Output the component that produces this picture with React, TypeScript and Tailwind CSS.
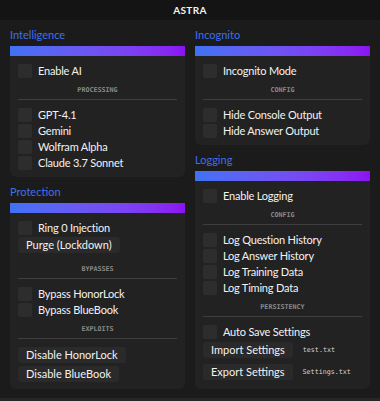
import type { ReactNode } from 'react';
import clsx from 'clsx';

const Box = () => <span className="block w-[14px] h-[14px] rounded-[2px] bg-[#2d2d2d] shrink-0" />;

function Check({ label }: { label: string }) {
  return (
    <div className="flex items-center gap-[6px] h-[14px]">
      <Box />
      <span className="leading-[14px] whitespace-nowrap tracking-[-0.2px]">{label}</span>
    </div>
  );
}

function Btn({ label, className }: { label: string; className?: string }) {
  return (
    <div className={clsx('flex', className)}>
      <span className="h-[16px] px-[8px] flex items-center rounded-[3px] bg-[#2a2a2a] whitespace-nowrap leading-[16px]">
        {label}
      </span>
    </div>
  );
}

function Label({ text, afterButton }: { text: string; afterButton?: boolean }) {
  return (
    <div className={clsx('flex flex-col items-center', afterButton ? 'mt-[12px]' : 'mt-[8px]')}>
      <span className="font-['DejaVu_Sans_Mono',monospace] font-bold text-[6.7px] leading-[8px] text-[#8a8a8a]">
        {text}
      </span>
      <div className="mt-[5px] mb-[8px] h-px w-full bg-[#3e3e3e]" />
    </div>
  );
}

function Section({ title, pb, children }: { title: string; pb: string; children: ReactNode }) {
  return (
    <div className="mt-[8px]">
      <div className="h-[14px] leading-[14px] text-[#3f6ff0]">{title}</div>
      <div className="mt-[4px] h-[10px] bg-gradient-to-r from-[#3f72f3] to-[#8c11f2]" />
      <div className={clsx('bg-[#222222] rounded-b-[6px] px-[8px] pt-[8px]', pb)}>{children}</div>
    </div>
  );
}

export default function App() {
  return (
    <div className="w-[380px] h-[401px] bg-[#1b1b1b] flex flex-col text-[#f2f2f2] text-[11px] font-['Lato',sans-serif] overflow-hidden">
      <div className="h-[20px] shrink-0 bg-[#141414] flex items-center justify-center">
        <span className="font-bold text-[10px] tracking-[0.3px]">ASTRA</span>
      </div>

      <div className="flex-1 grid grid-cols-[175px_175px] gap-x-[10px] px-[10px]">
        {/* left column */}
        <div className="flex flex-col">
          <Section title="Intelligence" pb="pb-[7px]">
            <Check label="Enable AI" />
            <Label text="PROCESSING" />
            <div className="flex flex-col gap-[2px]">
              <Check label="GPT-4.1" />
              <Check label="Gemini" />
              <Check label="Wolfram Alpha" />
              <Check label="Claude 3.7 Sonnet" />
            </div>
          </Section>

          <Section title="Protection" pb="pb-[7px]">
            <Check label="Ring 0 Injection" />
            <Btn label="Purge (Lockdown)" className="mt-[2px]" />
            <Label text="BYPASSES" afterButton />
            <div className="flex flex-col gap-[2px]">
              <Check label="Bypass HonorLock" />
              <Check label="Bypass BlueBook" />
            </div>
            <Label text="EXPLOITS" />
            <Btn label="Disable HonorLock" />
            <Btn label="Disable BlueBook" className="mt-[3px]" />
          </Section>
        </div>

        {/* right column */}
        <div className="flex flex-col">
          <Section title="Incognito" pb="pb-[7px]">
            <Check label="Incognito Mode" />
            <Label text="CONFIG" />
            <div className="flex flex-col gap-[2px]">
              <Check label="Hide Console Output" />
              <Check label="Hide Answer Output" />
            </div>
          </Section>

          <Section title="Logging" pb="pb-[9px]">
            <Check label="Enable Logging" />
            <Label text="CONFIG" />
            <div className="flex flex-col gap-[2px]">
              <Check label="Log Question History" />
              <Check label="Log Answer History" />
              <Check label="Log Training Data" />
              <Check label="Log Timing Data" />
            </div>
            <Label text="PERSISTENCY" />
            <Check label="Auto Save Settings" />
            <div className="mt-[3px] flex items-center gap-[10px]">
              <Btn label="Import Settings" />
              <span className="font-['DejaVu_Sans_Mono',monospace] text-[6.7px] text-[#d6d6d6]">test.txt</span>
            </div>
            <div className="mt-[6px] flex items-center gap-[10px]">
              <Btn label="Export Settings" />
              <span className="font-['DejaVu_Sans_Mono',monospace] text-[6.7px] text-[#d6d6d6]">Settings.txt</span>
            </div>
          </Section>
        </div>
      </div>

      <div className="h-[3px] shrink-0 bg-[#262626]" />
    </div>
  );
}
